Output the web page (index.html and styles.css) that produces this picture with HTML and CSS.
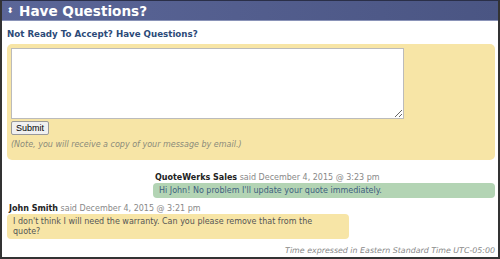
FILE: index.html
```html
<!DOCTYPE html>
<html lang="en">
<head>
    <meta charset="UTF-8">
    <title>Have Questions?</title>
    <link rel="stylesheet" href="styles.css">
</head>
<body>

<div class="panel">
    <div class="panel-header">
        <span class="toggle">&#x2B0D;</span>
        <h1>Have Questions?</h1>
    </div>

    <div class="panel-body">
        <h2>Not Ready To Accept? Have Questions?</h2>

        <div class="ask-box">
            <textarea class="message"></textarea>
            <div><button>Submit</button></div>
            <p class="note">(Note, you will receive a copy of your message by email.)</p>
        </div>

        <div class="thread">
            <div class="post post-staff">
                <div class="meta"><b>QuoteWerks Sales</b> said December 4, 2015 @ 3:23 pm</div>
                <div class="bubble green">Hi John! No problem I'll update your quote immediately.</div>
            </div>
            <div class="post post-client">
                <div class="meta"><b>John Smith</b> said December 4, 2015 @ 3:21 pm</div>
                <div class="bubble yellow">I don't think I will need the warranty. Can you please remove that from the quote?</div>
            </div>
        </div>

        <p class="timezone">Time expressed in Eastern Standard Time UTC-05:00</p>
    </div>
</div>

</body>
</html>
```

FILE: styles.css
```css
body {
    margin: 0;
    font-family: "DejaVu Sans", Verdana, sans-serif;
    background: #fff;
}
.panel {
    width: 500px;
    height: 259px;
    box-sizing: border-box;
    border: 2px solid #333;
    border-top: 1px solid #2a2f48;
    display: flex;
    flex-direction: column;
}
.panel-header {
    height: 19px;
    display: flex;
    align-items: center;
    background: linear-gradient(to right, #5b6698, #4a5583);
    border-bottom: 1px solid #8a93b8;
    color: #fff;
    padding-left: 5px;
}
.toggle {
    font-size: 8px;
    width: 12px;
}
h1 {
    margin: 0;
    font-size: 13.6px;
    line-height: 16px;
    font-weight: bold;
}
.panel-body {
    padding: 0 3px 0 5px;
}
h2 {
    margin: 8px 0 4px 0;
    font-size: 8.7px;
    line-height: 11px;
    color: #2c4a78;
}
.ask-box {
    background: #f7e5a6;
    border-radius: 5px;
    padding: 4px 4px 10px 4px;
}
.message {
    display: block;
    width: 393px;
    height: 71px;
    box-sizing: border-box;
    border: 1px solid #bbb;
    margin: 0;
    resize: both;
}
button {
    display: block;
    margin-top: 2px;
    font-family: "Liberation Sans", Arial, sans-serif;
    font-size: 9px;
    padding: 0 4px;
    height: 14px;
    line-height: 11px;
    background: #f0f0f0;
    border: 1px solid #999;
    border-radius: 2px;
}
.note {
    margin: 5px 0 0 0;
    font-size: 8px;
    line-height: 10px;
    font-style: italic;
    color: #8a8a7a;
}
.thread {
    display: flex;
    flex-direction: column;
    gap: 6px;
    margin-top: 13px;
}
.post-staff {
    margin-left: 146px;
}
.post-client {
    width: 342px;
}
.meta {
    font-size: 8px;
    line-height: 10px;
    color: #888;
    padding-left: 2px;
}
.meta b {
    color: #222;
}
.bubble {
    font-size: 8px;
    line-height: 10px;
    padding: 2.5px 12px 2.5px 6px;
    border-radius: 4px;
}
.green {
    background: #b3d4b4;
    color: #3e6080;
}
.yellow {
    background: #f7e5a6;
    color: #555;
}
.timezone {
    margin: 7px 0 0 0;
    text-align: right;
    font-size: 7.9px;
    line-height: 10px;
    font-style: italic;
    color: #888;
}
```
